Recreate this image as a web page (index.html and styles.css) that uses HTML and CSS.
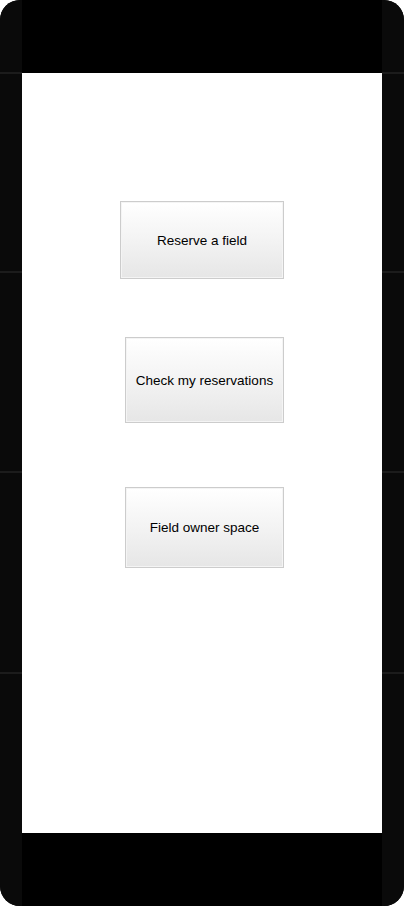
FILE: index.html
```html
<!DOCTYPE html>
<html>
<head>
<meta charset="utf-8">
<link rel="stylesheet" href="styles.css">
</head>
<body>
<div class="frame">
  <div class="side">
    <div class="seg seg-first"></div>
    <div class="seg seg-a"></div>
    <div class="seg seg-b"></div>
    <div class="seg seg-c"></div>
    <div class="seg seg-last"></div>
  </div>
  <div class="center">
    <div class="bezel"></div>
    <div class="screen">
      <button class="btn btn-1">Reserve a field</button>
      <button class="btn btn-2">Check my reservations</button>
      <button class="btn btn-3">Field owner space</button>
    </div>
    <div class="bezel"></div>
  </div>
  <div class="side">
    <div class="seg seg-first"></div>
    <div class="seg seg-a"></div>
    <div class="seg seg-b"></div>
    <div class="seg seg-c"></div>
    <div class="seg seg-last"></div>
  </div>
</div>
</body>
</html>
```
FILE: styles.css
```css
html, body {
  margin: 0;
  padding: 0;
  background: #ffffff;
}
.frame {
  width: 404px;
  height: 906px;
  display: flex;
  border-radius: 20px;
  overflow: hidden;
  background: #0a0a0a;
}
.side {
  width: 22px;
  display: flex;
  flex-direction: column;
  background: #0a0a0a;
}
.seg {
  flex: none;
}
.seg-first { height: 72px; }
.seg-a { height: 197px; border-top: 2px solid #1c1c1c; }
.seg-b { height: 198px; border-top: 2px solid #1c1c1c; }
.seg-c { height: 199px; border-top: 2px solid #1c1c1c; }
.seg-last { flex: 1; border-top: 2px solid #1c1c1c; }
.center {
  width: 360px;
  display: flex;
  flex-direction: column;
  background: #000000;
}
.bezel {
  height: 73px;
  flex: none;
}
.screen {
  height: 760px;
  flex: none;
  background: #ffffff;
  display: flex;
  flex-direction: column;
  align-items: flex-start;
  padding-top: 128px;
  box-sizing: border-box;
}
.btn {
  font-family: "Liberation Sans", Arial, sans-serif;
  font-size: 13.5px;
  color: #000000;
  background: linear-gradient(to bottom, #ffffff 0%, #f3f3f3 50%, #e6e6e6 100%);
  border: 1px solid #cccccc;
  box-shadow: inset 0 0 0 1px #f4f4f4;
  border-radius: 0;
  padding: 0;
  margin: 0;
  box-sizing: border-box;
  display: flex;
  align-items: center;
  justify-content: center;
}
.btn-1 {
  width: 164px;
  height: 78px;
  margin-left: 98px;
}
.btn-2 {
  width: 159px;
  height: 86px;
  margin-left: 103px;
  margin-top: 58px;
}
.btn-3 {
  width: 159px;
  height: 81px;
  margin-left: 103px;
  margin-top: 64px;
}
```
